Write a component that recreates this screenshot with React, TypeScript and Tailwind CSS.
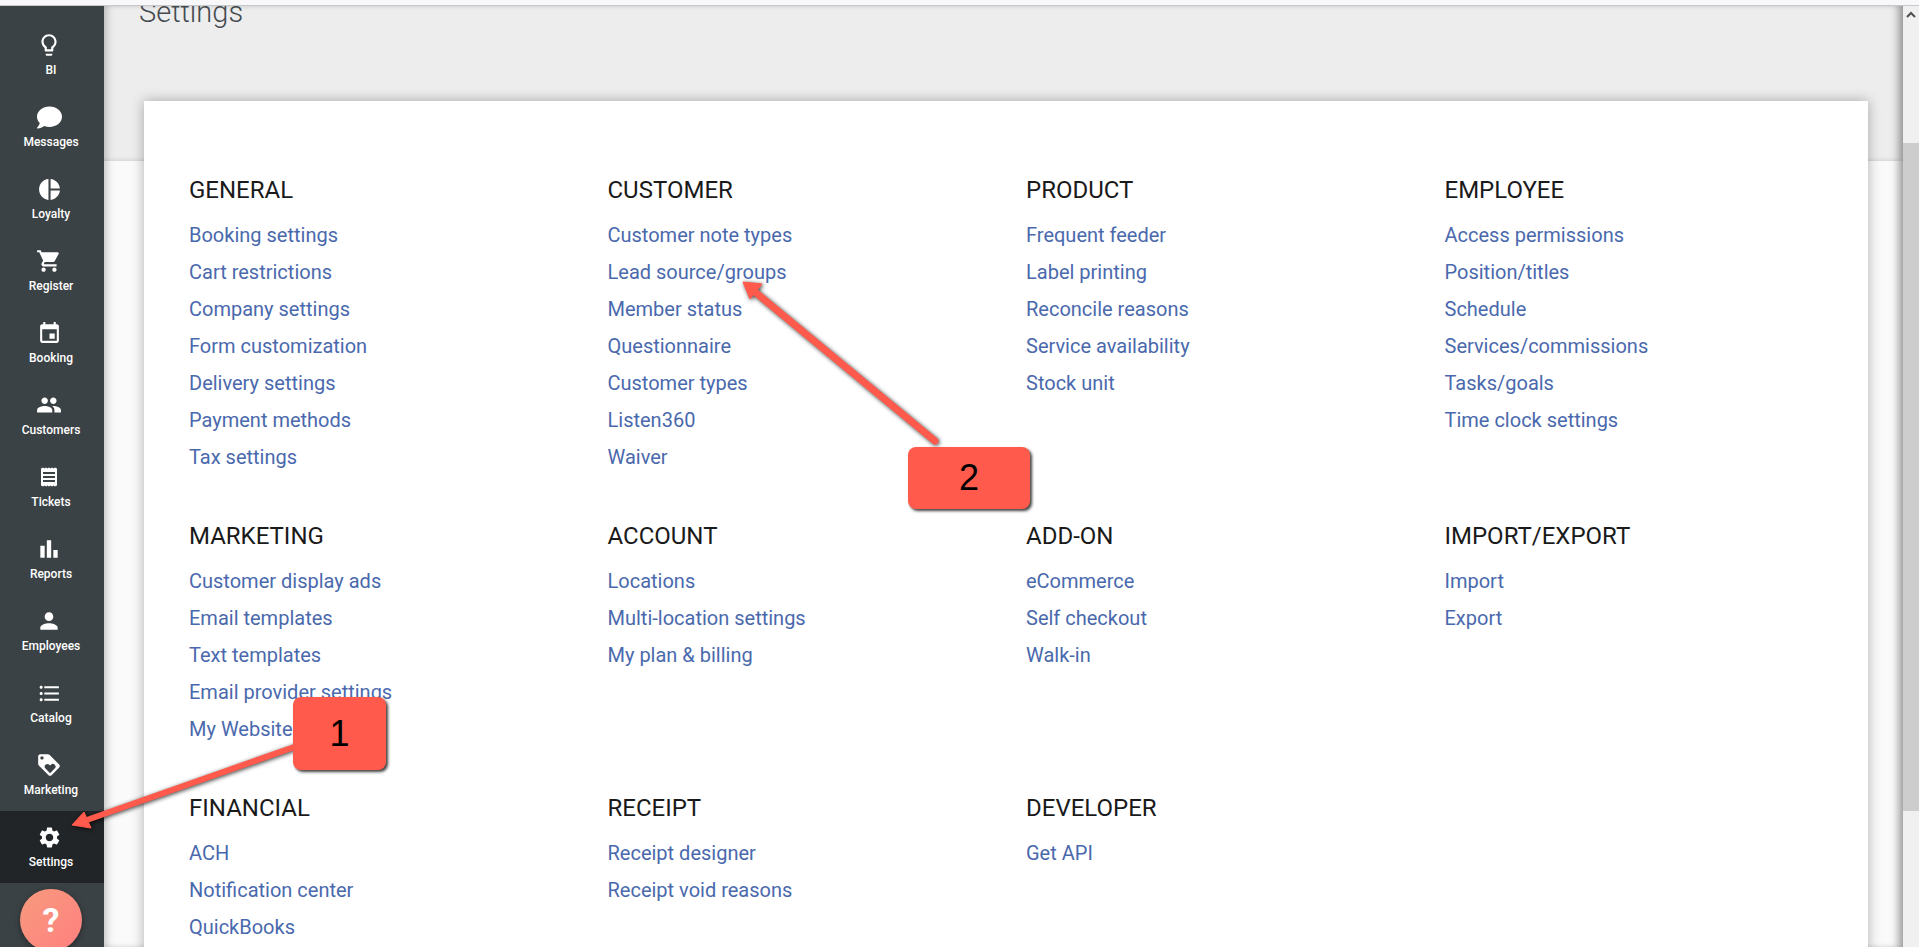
import type { ReactNode } from 'react'
import {
  MdBarChart,
  MdEvent,
  MdFormatListBulleted,
  MdLoyalty,
  MdOutlineLightbulb,
  MdPeople,
  MdPerson,
  MdPieChart,
  MdSettings,
  MdShoppingCart,
} from 'react-icons/md'
import { FaComment } from 'react-icons/fa'

/** small receipt icon, the md one has the wrong edges */
function TicketIcon() {
  return (
    <svg width="24" height="24" viewBox="0 0 24 24" fill="white">
      <path d="M3 2.5l1.5 1 1.5-1 1.5 1 1.5-1 1.5 1 1.5-1 1.5 1 1.5-1 1.5 1 1.5-1 1.5 1 .5-.6v18.2l-.5-.6-1.5 1-1.5-1-1.5 1-1.5-1-1.5 1-1.5-1-1.5 1-1.5-1-1.5 1-1.5-1-.5.6V2.9z" />
      <path d="M6 7h12v2H6zM6 11h12v2H6zM6 15h12v2H6z" fill="#3b4245" />
    </svg>
  )
}

const NAV_ITEMS: { label: string; icon: ReactNode; active?: boolean }[] = [
  { label: 'BI', icon: <MdOutlineLightbulb size={26} /> },
  { label: 'Messages', icon: <FaComment size={25} /> },
  { label: 'Loyalty', icon: <MdPieChart size={25} /> },
  { label: 'Register', icon: <MdShoppingCart size={26} /> },
  { label: 'Booking', icon: <MdEvent size={25} /> },
  { label: 'Customers', icon: <MdPeople size={26} /> },
  { label: 'Tickets', icon: <TicketIcon /> },
  { label: 'Reports', icon: <MdBarChart size={26} /> },
  { label: 'Employees', icon: <MdPerson size={26} /> },
  { label: 'Catalog', icon: <MdFormatListBulleted size={25} /> },
  { label: 'Marketing', icon: <MdLoyalty size={26} /> },
  { label: 'Settings', icon: <MdSettings size={25} />, active: true },
]

const SECTIONS: { title: string; links: string[] }[][] = [
  [
    { title: 'GENERAL', links: ['Booking settings', 'Cart restrictions', 'Company settings', 'Form customization', 'Delivery settings', 'Payment methods', 'Tax settings'] },
    { title: 'CUSTOMER', links: ['Customer note types', 'Lead source/groups', 'Member status', 'Questionnaire', 'Customer types', 'Listen360', 'Waiver'] },
    { title: 'PRODUCT', links: ['Frequent feeder', 'Label printing', 'Reconcile reasons', 'Service availability', 'Stock unit'] },
    { title: 'EMPLOYEE', links: ['Access permissions', 'Position/titles', 'Schedule', 'Services/commissions', 'Tasks/goals', 'Time clock settings'] },
  ],
  [
    { title: 'MARKETING', links: ['Customer display ads', 'Email templates', 'Text templates', 'Email provider settings', 'My Website'] },
    { title: 'ACCOUNT', links: ['Locations', 'Multi-location settings', 'My plan & billing'] },
    { title: 'ADD-ON', links: ['eCommerce', 'Self checkout', 'Walk-in'] },
    { title: 'IMPORT/EXPORT', links: ['Import', 'Export'] },
  ],
  [
    { title: 'FINANCIAL', links: ['ACH', 'Notification center', 'QuickBooks'] },
    { title: 'RECEIPT', links: ['Receipt designer', 'Receipt void reasons'] },
    { title: 'DEVELOPER', links: ['Get API'] },
  ],
]

function Sidebar() {
  return (
    <aside className="w-[104px] shrink-0 bg-[#3b4245] pt-[13px] text-white z-10">
      {NAV_ITEMS.map((item) => (
        <div
          key={item.label}
          className={`h-[72px] flex flex-col items-center pt-[13px] pr-[2px] ${item.active ? 'bg-[#212527]' : ''}`}
        >
          <div className="h-[26px] w-[26px] mr-[4px] flex items-center justify-center">{item.icon}</div>
          <span className="text-[12px] leading-[16px] mt-[4px] font-medium">{item.label}</span>
        </div>
      ))}
      <div className="mt-[6px] ml-[20px] w-[62px] h-[62px] rounded-full bg-gradient-to-br from-[#f79a7e] to-[#ff7f7f] shadow-[0_2px_6px_rgba(0,0,0,0.4)] flex items-center justify-center text-[34px] font-bold">
        ?
      </div>
    </aside>
  )
}

function Annotations() {
  return (
    <>
      <svg className="absolute left-0 top-0 z-20 drop-shadow-[1px_1px_2px_rgba(0,0,0,0.75)]" width="1919" height="947" viewBox="0 0 1919 947">
        <g fill="#ff5a4b" stroke="#ff5a4b">
          <line x1="300" y1="745" x2="84" y2="821" strokeWidth="6" strokeLinecap="round" />
          <path d="M72 825 L84 812 L91 828 Z" strokeWidth="1" />
          <line x1="935" y1="441" x2="755" y2="292" strokeWidth="7" strokeLinecap="round" />
          <path d="M743 282 L762 284 L750 299 Z" strokeWidth="1" />
        </g>
      </svg>
      <div className="absolute z-20 left-[293px] top-[697px] w-[93px] h-[73px] rounded-[8px] bg-[#ff5a4b] shadow-[2px_2px_3px_rgba(0,0,0,0.75)] flex items-center justify-center text-[36px] text-black font-['Liberation_Sans',sans-serif]">
        1
      </div>
      <div className="absolute z-20 left-[908px] top-[447px] w-[122px] h-[62px] rounded-[8px] bg-[#ff5a4b] shadow-[2px_2px_3px_rgba(0,0,0,0.75)] flex items-center justify-center text-[36px] text-black font-['Liberation_Sans',sans-serif]">
        2
      </div>
    </>
  )
}

export default function App() {
  return (
    <div className="relative h-[947px] overflow-hidden font-['Roboto',sans-serif] bg-[#f8f8fb]">
      <div className="h-[6px] border-b border-[#c8c8c8]" />
      <div className="flex h-[941px]">
        <Sidebar />
        <main className="flex-1 min-w-0 overflow-hidden bg-[#fafafa] shadow-[inset_8px_0_8px_-6px_rgba(0,0,0,0.25),inset_-8px_0_8px_-4px_rgba(0,0,0,0.4)]">
          <div className="h-[155px] overflow-hidden bg-[#ededed] pl-[35px] shadow-[inset_8px_0_8px_-6px_rgba(0,0,0,0.25),inset_-8px_0_8px_-4px_rgba(0,0,0,0.4)]">
            <h1 className="-mt-[10px] text-[29px] leading-[32px] font-light text-[#444b50]">Settings</h1>
          </div>
          <div className="-mt-[60px] ml-[40px] mr-[35px] relative h-[1000px] bg-white pl-[45px] pt-[73px] shadow-[0_0_12px_rgba(0,0,0,0.3)]">
            {SECTIONS.map((row, i) => (
              <div key={i} className="grid grid-cols-[repeat(4,418.5px)] mb-[44px]">
                {row.map((section) => (
                  <div key={section.title}>
                    <h2 className="h-[32px] leading-[32px] text-[24px] font-normal text-[#1a1a1a] mb-[11px]">{section.title}</h2>
                    {section.links.map((link) => (
                      <a key={link} className="block h-[37px] leading-[37px] text-[20px] text-[#4a69ad]">{link}</a>
                    ))}
                  </div>
                ))}
              </div>
            ))}
          </div>
        </main>
        <div className="relative w-[16px] shrink-0 bg-[#f0f0f0]">
          <div className="flex justify-center pt-[5px]">
            <svg width="10" height="7" viewBox="0 0 10 7">
              <path d="M1 6 L5 2 L9 6" fill="none" stroke="#505050" strokeWidth="2" />
            </svg>
          </div>
          <div className="absolute left-0 top-[137px] w-[16px] h-[668px] bg-[#cdcdcd]" />
        </div>
      </div>
      <Annotations />
    </div>
  )
}
